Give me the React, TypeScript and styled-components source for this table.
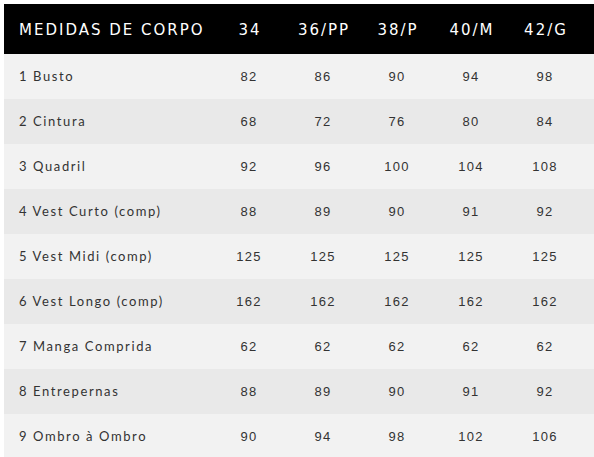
import styled, { createGlobalStyle } from "styled-components";

const GlobalStyle = createGlobalStyle`
	html,
	body {
		margin: 0;
		padding: 0;
		overflow: hidden;
		background: #ffffff;
	}
`;

const Page = styled.div`
	padding: 4px 0 0 4px;
	width: 600px;
`;

const Table = styled.div`
	display: flex;
	flex-direction: column;
	width: 600px;
`;

const Row = styled.div<{ $tone: "head" | "light" | "dark" }>`
	display: grid;
	grid-template-columns: 208px repeat(5, 74px) 1fr;
	align-items: center;
	height: ${(p) => (p.$tone === "head" ? "50px" : "45px")};
	background: ${(p) =>
		p.$tone === "head" ? "#000000" : p.$tone === "light" ? "#f2f2f2" : "#e9e9e9"};
	color: ${(p) => (p.$tone === "head" ? "#ffffff" : "#333333")};
`;

const HeadCell = styled.div<{ $first?: boolean }>`
	font-family: "DejaVu Sans", Verdana, sans-serif;
	font-size: 15px;
	letter-spacing: 2px;
	text-align: ${(p) => (p.$first ? "left" : "center")};
	padding-left: ${(p) => (p.$first ? "15px" : "2px")};
	padding-top: 2px;
	white-space: nowrap;
`;

const Label = styled.div`
	font-family: Lato, "Noto Sans", sans-serif;
	font-size: 13px;
	letter-spacing: 1.6px;
	padding-left: 15px;
	padding-bottom: 1px;
	white-space: nowrap;
`;

const Num = styled.div`
	font-family: "Liberation Sans", Arial, sans-serif;
	font-size: 13px;
	letter-spacing: 1.3px;
	text-align: center;
	padding-bottom: 1px;
`;

const sizes = ["34", "36/PP", "38/P", "40/M", "42/G"];

const rows: [string, number[]][] = [
	["1 Busto", [82, 86, 90, 94, 98]],
	["2 Cintura", [68, 72, 76, 80, 84]],
	["3 Quadril", [92, 96, 100, 104, 108]],
	["4 Vest Curto (comp)", [88, 89, 90, 91, 92]],
	["5 Vest Midi (comp)", [125, 125, 125, 125, 125]],
	["6 Vest Longo (comp)", [162, 162, 162, 162, 162]],
	["7 Manga Comprida", [62, 62, 62, 62, 62]],
	["8 Entrepernas", [88, 89, 90, 91, 92]],
	["9 Ombro à Ombro", [90, 94, 98, 102, 106]],
];

export default function App() {
	return (
		<Page>
			<GlobalStyle />
			<Table>
				<Row $tone="head">
					<HeadCell $first>MEDIDAS DE CORPO</HeadCell>
					{sizes.map((s) => (
						<HeadCell key={s}>{s}</HeadCell>
					))}
					<div />
				</Row>
				{rows.map(([label, values], i) => (
					<Row key={label} $tone={i % 2 === 0 ? "light" : "dark"}>
						<Label>{label}</Label>
						{values.map((v, j) => (
							<Num key={j}>{v}</Num>
						))}
						<div />
					</Row>
				))}
			</Table>
		</Page>
	);
}
